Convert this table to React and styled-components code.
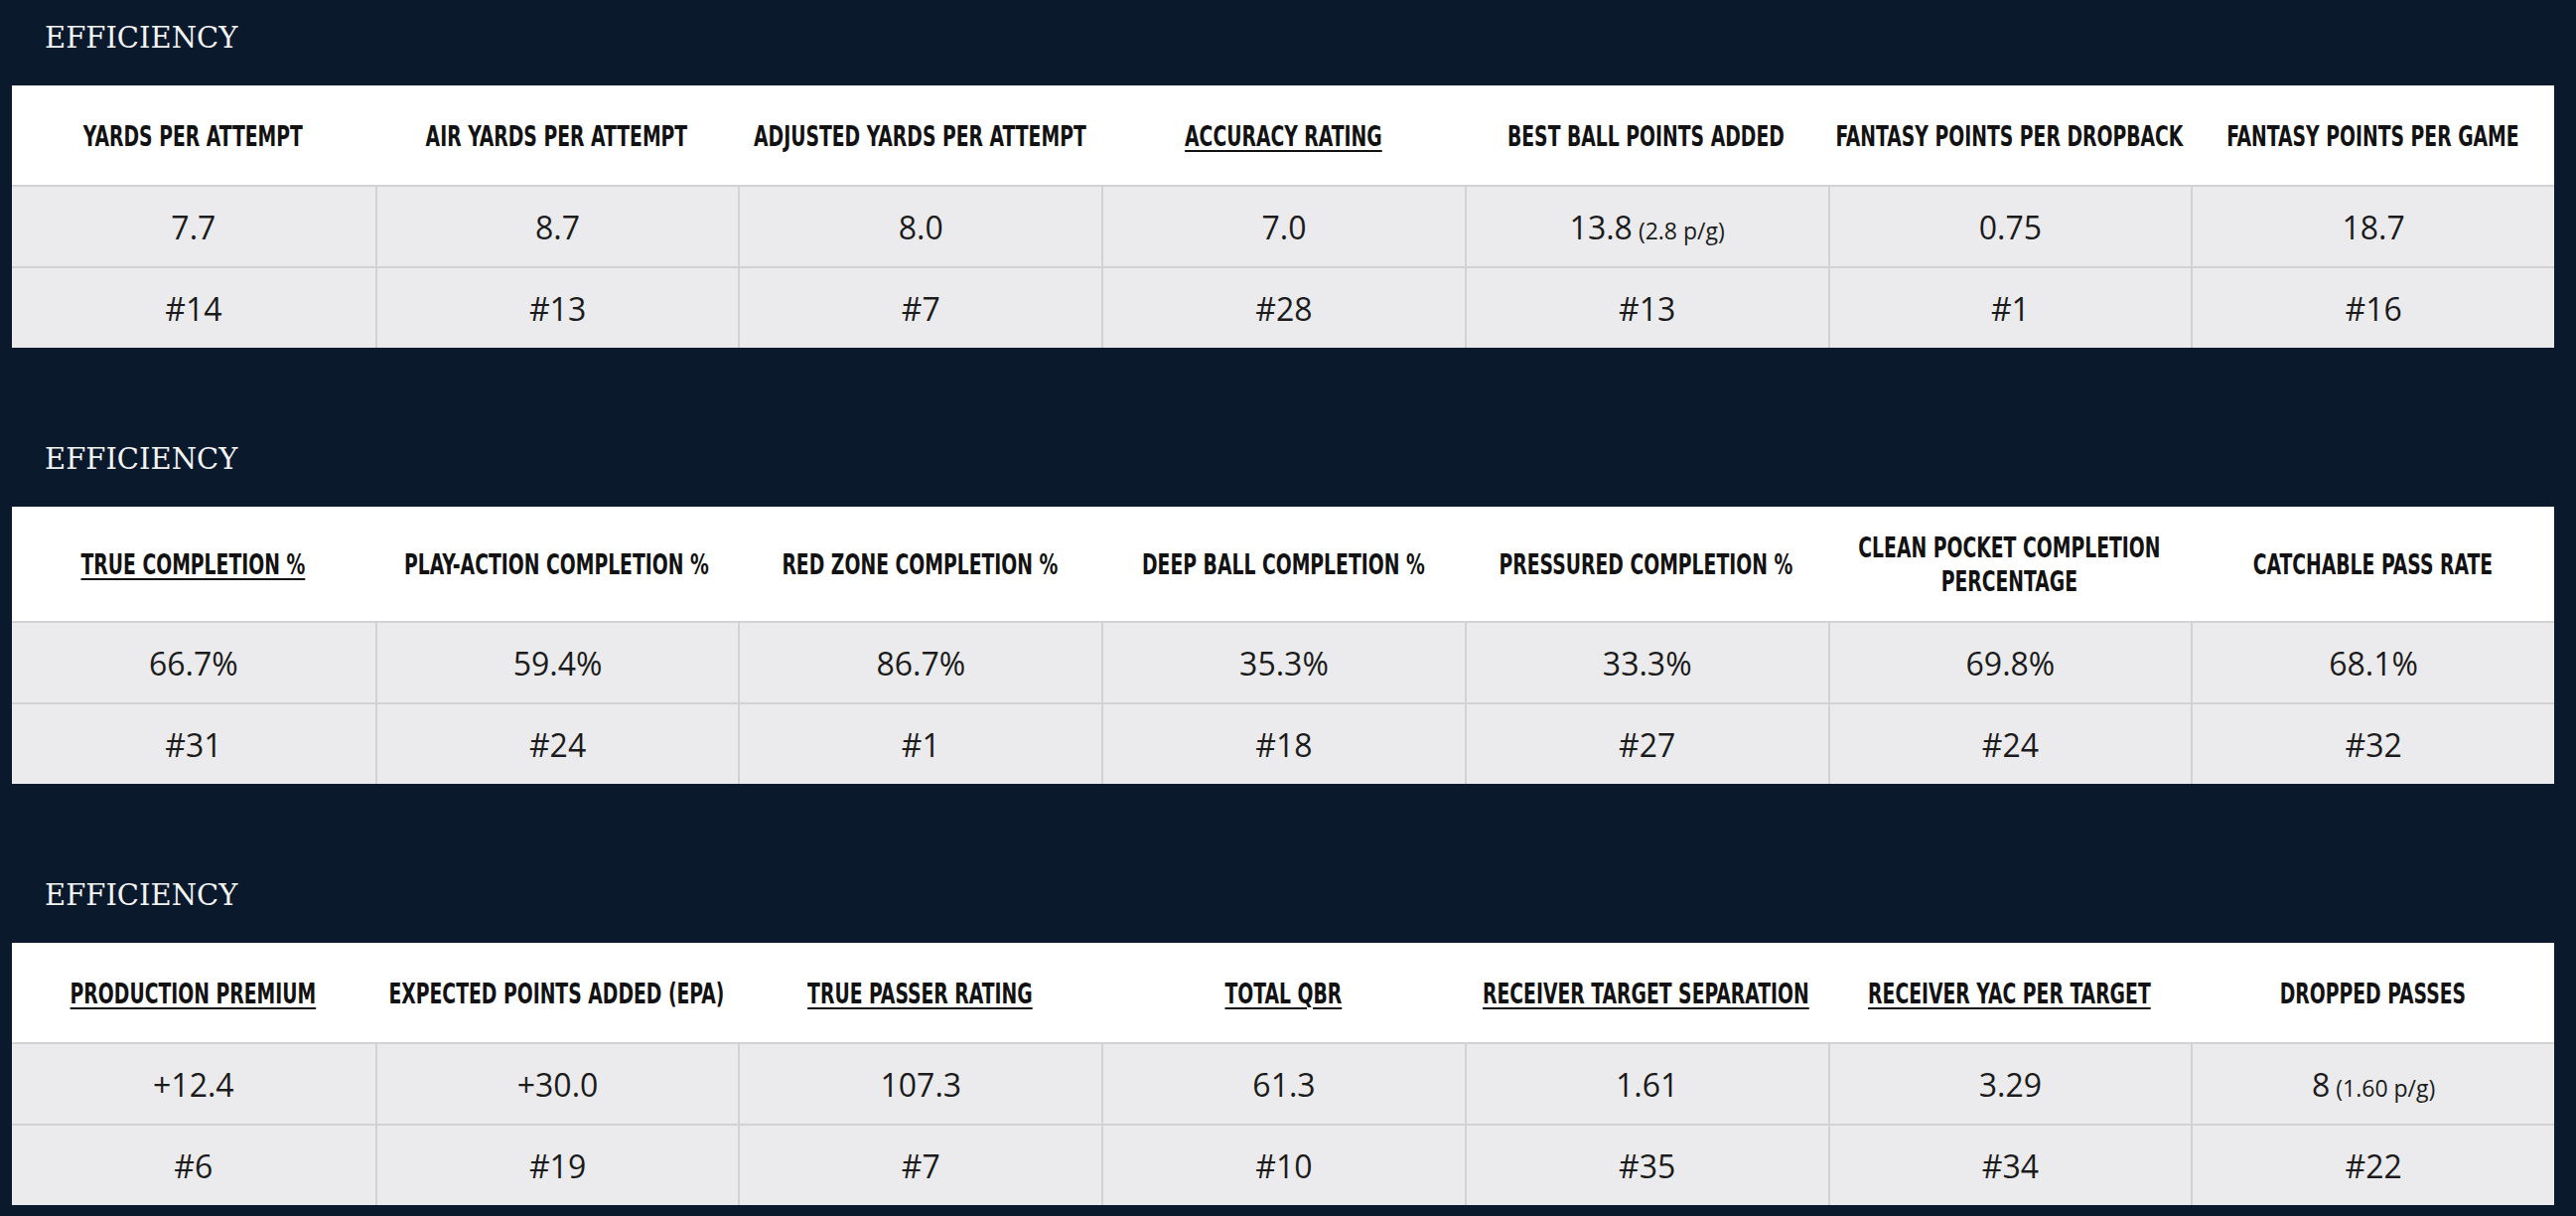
import styled, { createGlobalStyle } from "styled-components";

const GlobalStyle = createGlobalStyle`
  html, body {
    margin: 0;
    padding: 0;
    background: #0b192c;
  }
`;

const Page = styled.div`
  min-height: 100vh;
  padding: 0 22px 40px 12px;
  background: #0b192c;
`;

const Section = styled.section`
  & + & {
    margin-top: 74px;
  }
`;

const Title = styled.h2`
  margin: 0;
  padding: 24px 0 33px 33px;
  font-family: "DejaVu Serif", "Liberation Serif", serif;
  font-weight: 400;
  font-size: 29px;
  line-height: 29px;
  color: #f2f3f5;
`;

const Grid = styled.div`
  display: grid;
  grid-template-columns: repeat(7, minmax(0, 1fr));
`;

const HeadCell = styled.div`
  min-height: 102px;
  box-sizing: border-box;
  padding: 24px 2px 23px;
  display: flex;
  align-items: center;
  justify-content: center;
  background: #ffffff;
  border-bottom: 2px solid #d2d2d5;
`;

/* condensed display face is not installed: squeeze a condensed sans horizontally */
const HeadLabel = styled.span`
  flex: none;
  display: inline-block;
  width: 139%;
  transform: scaleX(0.72);
  text-align: center;
  font-family: "DejaVu Sans Condensed", "DejaVu Sans", sans-serif;
  font-weight: 700;
  font-size: 29px;
  line-height: 34px;
  color: #121212;
  text-decoration: ${(p) => (p.$link ? "underline" : "none")};
  text-decoration-thickness: 2px;
  text-underline-offset: 4px;
`;

const Cell = styled.div`
  height: 80px;
  display: flex;
  align-items: center;
  justify-content: center;
  background: #ebebed;
  font-family: "Open Sans", "Noto Sans", sans-serif;
  font-size: 32px;
  color: #1b1b1b;
  border-top: ${(p) => (p.$second ? "2px solid #d2d2d5" : "none")};
  border-left: ${(p) => (p.$first ? "none" : "2px solid #d2d2d5")};
`;

const Small = styled.span`
  font-size: 23px;
`;

const sections = [
  {
    headers: [
      ["YARDS PER ATTEMPT"],
      ["AIR YARDS PER ATTEMPT"],
      ["ADJUSTED YARDS PER ATTEMPT"],
      ["ACCURACY RATING", true],
      ["BEST BALL POINTS ADDED"],
      ["FANTASY POINTS PER DROPBACK"],
      ["FANTASY POINTS PER GAME"],
    ],
    values: [["7.7"], ["8.7"], ["8.0"], ["7.0"], ["13.8", "(2.8 p/g)"], ["0.75"], ["18.7"]],
    ranks: ["#14", "#13", "#7", "#28", "#13", "#1", "#16"],
  },
  {
    headers: [
      ["TRUE COMPLETION %", true],
      ["PLAY-ACTION COMPLETION %"],
      ["RED ZONE COMPLETION %"],
      ["DEEP BALL COMPLETION %"],
      ["PRESSURED COMPLETION %"],
      ["CLEAN POCKET COMPLETION PERCENTAGE"],
      ["CATCHABLE PASS RATE"],
    ],
    values: [["66.7%"], ["59.4%"], ["86.7%"], ["35.3%"], ["33.3%"], ["69.8%"], ["68.1%"]],
    ranks: ["#31", "#24", "#1", "#18", "#27", "#24", "#32"],
  },
  {
    headers: [
      ["PRODUCTION PREMIUM", true],
      ["EXPECTED POINTS ADDED (EPA)"],
      ["TRUE PASSER RATING", true],
      ["TOTAL QBR", true],
      ["RECEIVER TARGET SEPARATION", true],
      ["RECEIVER YAC PER TARGET", true],
      ["DROPPED PASSES"],
    ],
    values: [["+12.4"], ["+30.0"], ["107.3"], ["61.3"], ["1.61"], ["3.29"], ["8", "(1.60 p/g)"]],
    ranks: ["#6", "#19", "#7", "#10", "#35", "#34", "#22"],
  },
];

function StatTable({ data }) {
  return (
    <Grid>
      {data.headers.map(([label, link]) => (
        <HeadCell key={label}>
          <HeadLabel $link={link}>{label}</HeadLabel>
        </HeadCell>
      ))}
      {data.values.map(([main, extra], i) => (
        <Cell key={"v" + i} $first={i === 0}>
          <span>
            {main}
            {extra && <Small> {extra}</Small>}
          </span>
        </Cell>
      ))}
      {data.ranks.map((rank, i) => (
        <Cell key={"r" + i} $first={i === 0} $second>
          {rank}
        </Cell>
      ))}
    </Grid>
  );
}

export default function App() {
  return (
    <>
      <GlobalStyle />
      <Page>
        {sections.map((s, i) => (
          <Section key={i}>
            <Title>EFFICIENCY</Title>
            <StatTable data={s} />
          </Section>
        ))}
      </Page>
    </>
  );
}
